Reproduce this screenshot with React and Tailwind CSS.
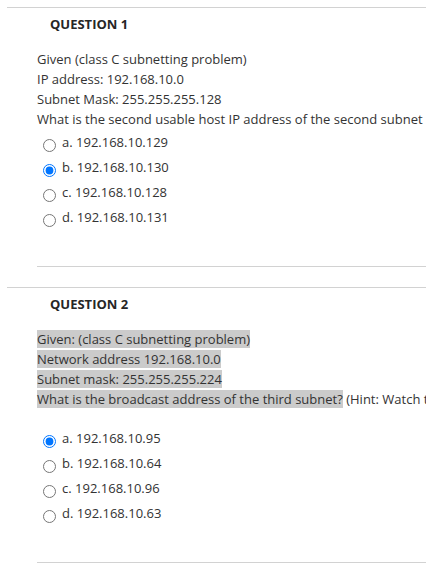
const questions = [
  {
    title: 'QUESTION 1',
    name: 'q1',
    highlight: false,
    lines: [
      'Given (class C subnetting problem)',
      'IP address: 192.168.10.0',
      'Subnet Mask: 255.255.255.128',
      'What is the second usable host IP address of the second subnet',
    ],
    options: ['192.168.10.129', '192.168.10.130', '192.168.10.128', '192.168.10.131'],
    picked: 1,
  },
  {
    title: 'QUESTION 2',
    name: 'q2',
    highlight: true,
    lines: [
      'Given: (class C subnetting problem)',
      'Network address 192.168.10.0',
      'Subnet mask: 255.255.255.224',
      'What is the broadcast address of the third subnet?',
    ],
    tail: ' (Hint: Watch the subnet mask boundaries)',
    options: ['192.168.10.95', '192.168.10.64', '192.168.10.96', '192.168.10.63'],
    picked: 0,
  },
];

const letters = ['a.', 'b.', 'c.', 'd.'];

const Question = ({ q }) => (
  <section className="border-t border-[#d2d2d2]">
    <h2 className="mt-[6px] pl-[43px] text-[13px] font-bold leading-[20px] text-[#262626]">{q.title}</h2>

    <div className="mt-[15px] overflow-hidden pl-[30px] text-[13px] leading-[20px] text-[#333333]">
      {q.lines.map((line, i) => (
        <p key={i} className="whitespace-nowrap">
          {q.highlight ? <span className="bg-[#cbcbcb]">{line}</span> : line}
          {i === q.lines.length - 1 && q.tail}
        </p>
      ))}
    </div>

    <div className={`${q.highlight ? 'mt-[17px]' : 'mt-[1px]'} pl-[36px]`}>
      {q.options.map((opt, i) => (
        <label key={i} className="flex h-[25px] items-center text-[13px] text-[#333333]">
          <input
            type="radio"
            name={q.name}
            defaultChecked={i === q.picked}
            className="m-0 mt-[5px] h-[13px] w-[13px] accent-[#0075ff]"
          />
          <span className="ml-[6px]">
            {letters[i]} {opt}
          </span>
        </label>
      ))}
    </div>

    <div className="ml-[30px] mt-[36px] border-t border-[#d2d2d2]" />
  </section>
);

const App = () => {
  return (
    <div className="w-[426px] overflow-hidden bg-white pl-[7px] pt-[7px] font-['Open_Sans',sans-serif]">
      <Question q={questions[0]} />
      <div className="h-[20px]" />
      <Question q={questions[1]} />
    </div>
  );
};

export default App;
